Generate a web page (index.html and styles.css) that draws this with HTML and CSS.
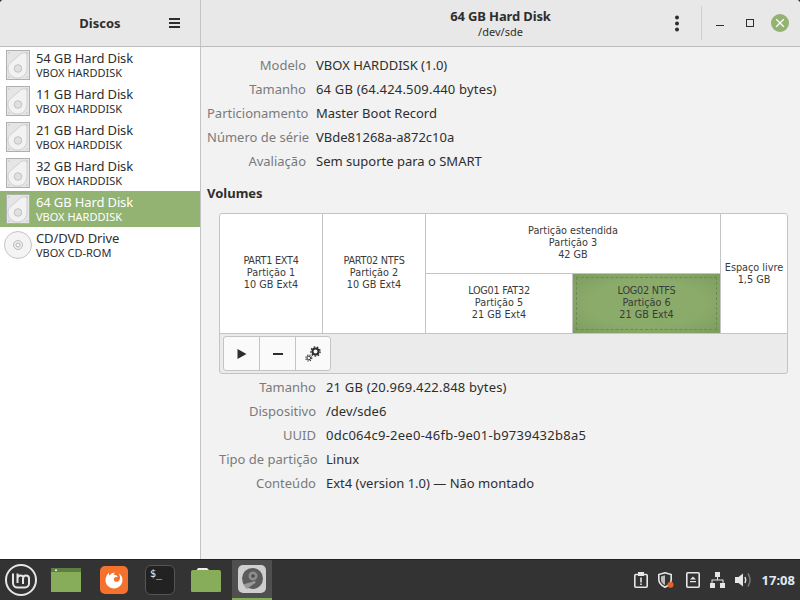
FILE: index.html
```html
<!DOCTYPE html>
<html lang="en">
<head>
    <meta charset="UTF-8">
    <title>Discos</title>
    <link rel="stylesheet" href="styles.css">
</head>
<body>
    <div class="window">
        <header class="titlebar">
            <div class="side-head">
                <span class="side-title">Discos</span>
                <svg class="hamburger" width="11" height="10" viewBox="0 0 11 10"><path d="M0 0h11v2H0zM0 4h11v2H0zM0 8h11v2H0z" fill="#2e2e2e"/></svg>
            </div>
            <div class="main-head">
                <div class="spacer"></div>
                <div class="disk-title">
                    <div class="disk-name">64 GB Hard Disk</div>
                    <div class="disk-path">/dev/sde</div>
                </div>
                <div class="win-controls">
                    <svg class="kebab" width="6" height="17" viewBox="0 0 6 17"><circle cx="3" cy="2.5" r="2" fill="#2e2e2e"/><circle cx="3" cy="8.5" r="2" fill="#2e2e2e"/><circle cx="3" cy="14.5" r="2" fill="#2e2e2e"/></svg>
                    <span class="head-sep"></span>
                    <svg class="min" width="8" height="2" viewBox="0 0 8 2"><path d="M0 0h8v1H0z" fill="#2e2e2e"/></svg>
                    <span class="max"></span>
                    <span class="close">
                        <svg width="18" height="18" viewBox="0 0 18 18"><path d="M5.2 5.2l7.6 7.6M12.8 5.2l-7.6 7.6" stroke="#fff" stroke-width="1.3"/></svg>
                    </span>
                </div>
            </div>
        </header>
        <div class="body">
            <aside class="sidebar">
                <div class="disk-row">
                    <svg class="hd" width="24" height="30" viewBox="0 0 24 30"><use href="#hd-icon"/></svg>
                    <div class="row-text"><div class="row-name">54 GB Hard Disk</div><div class="row-model">VBOX HARDDISK</div></div>
                </div>
                <div class="disk-row">
                    <svg class="hd" width="24" height="30" viewBox="0 0 24 30"><use href="#hd-icon"/></svg>
                    <div class="row-text"><div class="row-name">11 GB Hard Disk</div><div class="row-model">VBOX HARDDISK</div></div>
                </div>
                <div class="disk-row">
                    <svg class="hd" width="24" height="30" viewBox="0 0 24 30"><use href="#hd-icon"/></svg>
                    <div class="row-text"><div class="row-name">21 GB Hard Disk</div><div class="row-model">VBOX HARDDISK</div></div>
                </div>
                <div class="disk-row">
                    <svg class="hd" width="24" height="30" viewBox="0 0 24 30"><use href="#hd-icon"/></svg>
                    <div class="row-text"><div class="row-name">32 GB Hard Disk</div><div class="row-model">VBOX HARDDISK</div></div>
                </div>
                <div class="disk-row selected">
                    <svg class="hd" width="24" height="30" viewBox="0 0 24 30"><use href="#hd-icon"/></svg>
                    <div class="row-text"><div class="row-name">64 GB Hard Disk</div><div class="row-model">VBOX HARDDISK</div></div>
                </div>
                <div class="disk-row cd">
                    <svg class="cd-icon" width="28" height="28" viewBox="0 0 28 28">
                        <circle cx="14" cy="14" r="13.5" fill="#f4f4f4" stroke="#c4c4c4"/>
                        <circle cx="14" cy="14" r="4.5" fill="#ececec" stroke="#bdbdbd"/>
                        <circle cx="14" cy="14" r="2" fill="#fafafa" stroke="#b5b5b5"/>
                    </svg>
                    <div class="row-text"><div class="row-name">CD/DVD Drive</div><div class="row-model">VBOX CD-ROM</div></div>
                </div>
            </aside>
            <main class="content">
                <div class="props disk-props">
                    <div class="prop-label">Modelo</div><div class="prop-value">VBOX HARDDISK (1.0)</div>
                    <div class="prop-label">Tamanho</div><div class="prop-value digits">64 GB (64.424.509.440 bytes)</div>
                    <div class="prop-label">Particionamento</div><div class="prop-value">Master Boot Record</div>
                    <div class="prop-label">Número de série</div><div class="prop-value">VBde81268a-a872c10a</div>
                    <div class="prop-label">Avaliação</div><div class="prop-value">Sem suporte para o SMART</div>
                </div>
                <h2 class="volumes-title">Volumes</h2>
                <div class="volumes">
                    <div class="vol-grid">
                        <div class="vol"><div><span class="caps">PART1 EXT4</span><br>Partição 1<br>10 GB Ext4</div></div>
                        <div class="vol"><div><span class="caps">PART02 NTFS</span><br>Partição 2<br>10 GB Ext4</div></div>
                        <div class="vol-ext">
                            <div class="vol ext-head"><div>Partição estendida<br>Partição 3<br>42 GB</div></div>
                            <div class="vol"><div><span class="caps">LOG01 FAT32</span><br>Partição 5<br>21 GB Ext4</div></div>
                            <div class="vol vol-selected"><div class="vol-focus"><div><span class="caps">LOG02 NTFS</span><br>Partição 6<br>21 GB Ext4</div></div></div>
                        </div>
                        <div class="vol vol-free"><div>Espaço livre<br>1,5 GB</div></div>
                    </div>
                    <div class="vol-toolbar">
                        <div class="btn-group">
                            <button class="tool-btn"><svg width="12" height="12" viewBox="0 0 12 12"><path d="M1.500 1l9 5-9 5z" fill="#2e2e2e"/></svg></button>
                            <button class="tool-btn"><svg width="12" height="12" viewBox="0 0 12 12"><path d="M1 5h10v2H1z" fill="#2e2e2e"/></svg></button>
                            <button class="tool-btn"><svg width="16" height="16" viewBox="0 0 16 16"><g fill="none" stroke="#2e2e2e"><circle cx="10.500" cy="5.500" r="3" stroke-width="2"/><circle cx="10.500" cy="5.500" r="4.600" stroke-width="1.400" stroke-dasharray="1.600 1.600"/><circle cx="3.800" cy="12" r="1.800" stroke-width="1"/><circle cx="3.800" cy="12" r="3" stroke-width="1.100" stroke-dasharray="1.200 1.200"/></g></svg></button>
                        </div>
                    </div>
                </div>
                <div class="props vol-props">
                    <div class="prop-label">Tamanho</div><div class="prop-value digits">21 GB (20.969.422.848 bytes)</div>
                    <div class="prop-label">Dispositivo</div><div class="prop-value">/dev/sde6</div>
                    <div class="prop-label">UUID</div><div class="prop-value uuid">0dc064c9-2ee0-46fb-9e01-b9739432b8a5</div>
                    <div class="prop-label">Tipo de partição</div><div class="prop-value">Linux</div>
                    <div class="prop-label">Conteúdo</div><div class="prop-value">Ext4 (version 1.0) — Não montado</div>
                </div>
            </main>
        </div>
    </div>
    <footer class="panel">
        <div class="launchers">
            <div class="launcher menu-btn">
                <svg width="32" height="32" viewBox="0 0 32 32" fill="none" stroke="#e6e6e6">
                    <circle cx="16" cy="16" r="15" stroke-width="2"/>
                    <path d="M8 9.500v9.500a4.500 4.500 0 0 0 4.500 4.500h7.500a4 4 0 0 0 4-4v-5a3 3 0 0 0-3-3 3 3 0 0 0-3 3v5.500M12.500 9.500v9.500M12.500 14.500a3 3 0 0 1 3-3 3 3 0 0 1 3 3" stroke-width="2"/>
                </svg>
            </div>
            <div class="launcher">
                <svg class="shift-left" width="30" height="24" viewBox="0 0 30 24"><rect width="30" height="24" fill="#87ac5a"/><rect width="30" height="4" fill="#5f7f42"/><rect x="4" y="1.500" width="2" height="1.500" fill="#eee"/></svg>
            </div>
            <div class="launcher">
                <svg width="28" height="28" viewBox="0 0 28 28">
                    <rect width="28" height="28" rx="5" fill="#f4722e"/>
                    <path d="M9 6.500c-.3 1.500 0 2.500.5 3C11 7.500 13 6.500 15 6.500c-1 1-1.500 1.500-1.500 2.200 2.500-.2 4 1 4.300 2.800-1-.6-2-.5-2.800 0-1 .5-1.400 1.600-1 2.700.5 1.300 2 2 3.500 1.500 2-.6 3-2.700 2.400-5.200l-.8-3c2 1.400 3.400 3.800 3.400 6.500 0 4.800-3.800 8.500-8.500 8.500S5.500 19 5.500 14.300c0-3 1.200-5.500 3.500-7.800z" fill="#fff"/>
                </svg>
            </div>
            <div class="launcher">
                <div class="term-icon"><span class="term-text">$_</span></div>
            </div>
            <div class="launcher">
                <svg width="30" height="24" viewBox="0 0 30 24"><path d="M5 3l2-3h9l3 3z" fill="#eee"/><path d="M0 4a2 2 0 0 1 2-2h26a2 2 0 0 1 2 2v19a1 1 0 0 1-1 1H1a1 1 0 0 1-1-1z" fill="#87ac5a"/></svg>
            </div>
            <div class="launcher active">
                <svg width="28" height="28" viewBox="0 0 28 28">
                    <rect width="28" height="28" rx="5" fill="#cfcfcf"/>
                    <circle cx="14.500" cy="13.500" r="10.500" fill="#5c5c5c"/>
                    <circle cx="15" cy="11" r="4.500" fill="#8d8d8d"/>
                    <circle cx="15" cy="11" r="1.800" fill="#4a4a4a"/>
                    <path d="M5 19.500l12-3.500.8 1.500-9 6.500z" fill="#9a9a9a"/>
                </svg>
            </div>
        </div>
        <div class="tray">
            <svg class="tray-clip" width="14" height="16" viewBox="0 0 14 16"><rect x="0.800" y="2.500" width="12.400" height="12.700" rx="1" fill="none" stroke="#e6e6e6" stroke-width="1.600"/><rect x="4" y="0" width="6" height="4" fill="#e6e6e6"/><path d="M6.200 5.500h1.600v5H6.200zM6.200 11.500h1.600v1.500H6.200z" fill="#e6e6e6"/></svg>
            <svg class="tray-shield" width="17" height="16" viewBox="0 0 17 16"><path d="M8 .8l6.200 1.800v4.900c0 3.800-2.800 6-6.200 7.700-3.400-1.700-6.200-3.900-6.200-7.700V2.600z" fill="none" stroke="#e6e6e6" stroke-width="1.600"/><path d="M8 3.200L4 4.400V8c0 2.500 2 4 4 5z" fill="#bdbdbd"/><circle cx="13.500" cy="12.800" r="3" fill="#e0662c"/></svg>
            <svg width="14" height="16" viewBox="0 0 14 16"><rect x="0.800" y="0.800" width="12.400" height="14.400" rx="1" fill="none" stroke="#e6e6e6" stroke-width="1.600"/><path d="M7 4.500l3 3H4zM4 9h6v1.300H4z" fill="#e6e6e6"/></svg>
            <svg width="15" height="16" viewBox="0 0 15 16"><path d="M5 0h5v5H5zM0 11h5v5H0zM10 11h5v5h-5zM7 5h1v2.500h5.500V11h-1V8.500h-10V11h-1V7.500H7z" fill="#e6e6e6"/></svg>
            <svg width="17" height="16" viewBox="0 0 17 16"><path d="M0 5h3.500L8 1.500v13L3.500 11H0z" fill="#e6e6e6"/><path d="M10 5c1 2 1 4 0 6" fill="none" stroke="#e6e6e6" stroke-width="1.500"/><path d="M13 1.500c2.500 4 2.500 9 0 13" fill="none" stroke="#777" stroke-width="1.500"/></svg>
            <span class="clock">17:08</span>
        </div>
    </footer>

    <svg width="0" height="0" class="defs">
        <defs>
            <g id="hd-icon">
                <rect x="0.500" y="0.500" width="23" height="29" fill="#e4e5e6" stroke="#b0b0b0"/>
                <path d="M21 3.500V18.500a9.500 9.500 0 1 1-17.500-5L14.500 4c2-1.500 4.500-1.500 6.500-.5z" fill="#f2f2f2" stroke="#cfcfcf"/>
                <circle cx="12" cy="18.500" r="3.800" fill="#e0e0e0" stroke="#c2c2c2"/>
                <path d="M2.500 2.500h1v1h-1zM20.500 2.500h1v1h-1zM2.500 26.500h1v1h-1zM20.500 26.500h1v1h-1z" fill="#a8a8a8"/>
            </g>
        </defs>
    </svg>
</body>
</html>
```

FILE: styles.css
```css
html, body {
    margin: 0;
    height: 100%;
}

body {
    width: 800px;
    height: 600px;
    display: flex;
    flex-direction: column;
    overflow: hidden;
    background: #2b2b2b;
    font-family: "Noto Sans", sans-serif;
    font-size: 13px;
    color: #2e2e2e;
}

.defs {
    position: absolute;
}

/* window */
.window {
    flex: 1;
    display: flex;
    flex-direction: column;
    min-height: 0;
    background: #f2f2f2;
    border-radius: 4px 4px 0 0;
    overflow: hidden;
}

.titlebar {
    height: 46px;
    flex: none;
    display: flex;
    background: #e8e8e8;
    border-bottom: 1px solid #bdbdbd;
}

.side-head {
    width: 200px;
    flex: none;
    display: flex;
    align-items: center;
    justify-content: center;
    border-right: 1px solid #c4c4c4;
    position: relative;
}

.side-title {
    font-weight: 700;
}

.hamburger {
    position: absolute;
    left: 169px;
    top: 18px;
}

.main-head {
    flex: 1;
    display: grid;
    grid-template-columns: 131px 1fr 131px;
    align-items: center;
}

.disk-title {
    text-align: center;
}

.disk-name {
    font-weight: 700;
    line-height: 16px;
    letter-spacing: -0.13px;
}

.disk-path {
    font-size: 11px;
    line-height: 15px;
}

.win-controls {
    display: flex;
    align-items: center;
    height: 46px;
}

.kebab {
    margin-left: 5px;
}

.head-sep {
    width: 1px;
    height: 34px;
    background: #cfcfcf;
    margin-left: 21px;
}

.min {
    margin-left: 14px;
    margin-top: 6px;
}

.max {
    width: 6px;
    height: 6px;
    border: 1px solid #2e2e2e;
    margin-left: 22px;
}

.close {
    width: 18px;
    height: 18px;
    border-radius: 50%;
    background: #92b372;
    margin-left: 17px;
    display: flex;
}

.body {
    flex: 1;
    display: flex;
    min-height: 0;
}

/* disk list */
.sidebar {
    width: 200px;
    flex: none;
    background: #fff;
    border-right: 1px solid #c4c4c4;
}

.disk-row {
    height: 36px;
    display: flex;
    align-items: center;
    padding-left: 6px;
}

.disk-row.selected {
    background: #92b372;
    color: #fff;
}

.disk-row.cd {
    padding-left: 4px;
}

.hd {
    flex: none;
}

.row-text {
    margin-left: 6px;
}

.cd .row-text {
    margin-left: 4px;
}

.row-name {
    line-height: 16px;
    letter-spacing: -0.13px;
}

.row-model {
    font-size: 11px;
    line-height: 14px;
}

/* right side */
.content {
    flex: 1;
    padding: 6px 12px 0 6px;
    min-width: 0;
}

.props {
    display: grid;
    grid-auto-rows: 24px;
    column-gap: 10px;
    align-items: center;
}

.disk-props {
    grid-template-columns: 99px 1fr;
}

.vol-props {
    grid-template-columns: 97px 1fr;
    margin: 1px 0 0 12px;
}

.prop-label {
    text-align: right;
    color: #7a7a7a;
    white-space: nowrap;
}

.digits {
    letter-spacing: 0.18px;
}

.uuid {
    letter-spacing: 0.25px;
}

.volumes-title {
    font-size: 13px;
    font-weight: 700;
    margin: 12px 0 12px;
    line-height: 16px;
}

.volumes {
    margin-left: 12px;
    border: 1px solid #c4c4c4;
    border-radius: 3px;
    background: #ebebeb;
    overflow: hidden;
}

.vol-grid {
    display: grid;
    grid-template-columns: 102px 102px 294px 1fr;
    column-gap: 1px;
    height: 119px;
    background: #c4c4c4;
    border-bottom: 1px solid #c4c4c4;
    font-family: "DejaVu Sans", sans-serif;
    font-size: 9.700px;
    line-height: 12px;
    color: #3a3a3a;
}

.caps {
    letter-spacing: -0.25px;
}

.vol {
    background: #fff;
    display: flex;
    align-items: center;
    justify-content: center;
    text-align: center;
    padding-bottom: 2px;
    box-sizing: border-box;
}

.vol-free {
    padding-bottom: 0;
}

.vol-ext {
    display: grid;
    grid-template-columns: 146px 1fr;
    grid-template-rows: 59px 1fr;
    gap: 1px;
}

.ext-head {
    grid-column: 1 / 3;
}

.vol-selected {
    background: radial-gradient(ellipse at center, #8bab6b 55%, #7d9c5f);
    padding: 3px;
}

.vol-focus {
    flex: 1;
    align-self: stretch;
    border: 1px dashed #6d8a52;
    display: flex;
    align-items: center;
    justify-content: center;
    padding-bottom: 2px;
}

.vol-toolbar {
    height: 39px;
    display: flex;
    align-items: center;
    padding-left: 3px;
}

.btn-group {
    display: flex;
    height: 33px;
    background: #fafafa;
    border: 1px solid #c4c4c4;
    border-radius: 3px;
}

.tool-btn {
    width: 36px;
    padding: 0;
    border: none;
    border-right: 1px solid #c4c4c4;
    background: transparent;
    display: flex;
    align-items: center;
    justify-content: center;
}

.tool-btn:last-child {
    border-right: none;
    width: 34px;
}

/* bottom panel */
.panel {
    height: 41px;
    flex: none;
    box-sizing: border-box;
    display: flex;
    justify-content: space-between;
    background: #333;
    border-top: 1px solid #222;
}

.launchers {
    display: flex;
    gap: 6px;
}

.launcher {
    width: 40px;
    display: flex;
    align-items: center;
    justify-content: center;
    box-sizing: border-box;
}

.menu-btn {
    width: 42px;
}

.shift-left {
    margin-left: -4px;
}

.launcher.active {
    background: #4f4f4f;
    border-bottom: 2px solid #87ac5a;
}

.term-icon {
    width: 30px;
    height: 30px;
    box-sizing: border-box;
    background: #222;
    border: 1px solid #555;
    border-radius: 6px;
    padding: 3px 0 0 4px;
}

.term-text {
    font-family: "DejaVu Sans Mono", monospace;
    font-size: 10px;
    line-height: 10px;
    color: #eee;
    display: block;
}

.tray {
    display: flex;
    align-items: center;
    gap: 10px;
    padding-right: 5px;
}

.tray-clip {
    margin-right: -1px;
}

.tray-shield {
    margin-right: 2px;
}

.clock {
    font-weight: 700;
    color: #dfe8f2;
}
```
